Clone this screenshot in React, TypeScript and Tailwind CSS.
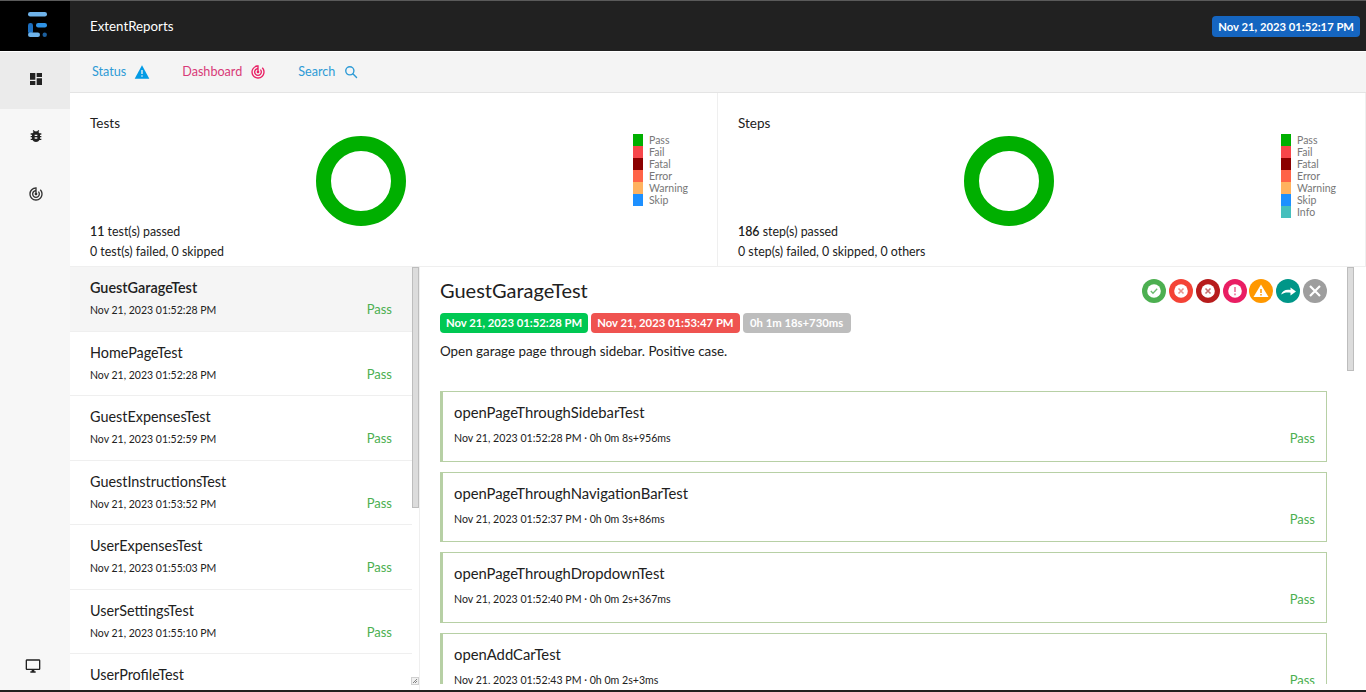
const tests = [
  ['GuestGarageTest', 'Nov 21, 2023 01:52:28 PM'],
  ['HomePageTest', 'Nov 21, 2023 01:52:28 PM'],
  ['GuestExpensesTest', 'Nov 21, 2023 01:52:59 PM'],
  ['GuestInstructionsTest', 'Nov 21, 2023 01:53:52 PM'],
  ['UserExpensesTest', 'Nov 21, 2023 01:55:03 PM'],
  ['UserSettingsTest', 'Nov 21, 2023 01:55:10 PM'],
];

const nodes = [
  ['openPageThroughSidebarTest', 'Nov 21, 2023 01:52:28 PM', '0h 0m 8s+956ms'],
  ['openPageThroughNavigationBarTest', 'Nov 21, 2023 01:52:37 PM', '0h 0m 3s+86ms'],
  ['openPageThroughDropdownTest', 'Nov 21, 2023 01:52:40 PM', '0h 0m 2s+367ms'],
  ['openAddCarTest', 'Nov 21, 2023 01:52:43 PM', '0h 0m 2s+3ms'],
];

const legend = [
  ['Pass', 'bg-[#00af00]'],
  ['Fail', 'bg-[#f7464a]'],
  ['Fatal', 'bg-[#8b0000]'],
  ['Error', 'bg-[#ff6347]'],
  ['Warning', 'bg-[#ffb25f]'],
  ['Skip', 'bg-[#1e90ff]'],
  ['Info', 'bg-[#46bfbd]'],
];

const radarPath =
  'M19.07 4.93l-1.41 1.41C19.1 7.79 20 9.79 20 12c0 4.42-3.58 8-8 8s-8-3.58-8-8c0-4.08 3.05-7.44 7-7.93v2.02C8.16 6.57 6 9.03 6 12c0 3.31 2.69 6 6 6s6-2.69 6-6c0-1.66-.67-3.16-1.76-4.24l-1.41 1.41C15.55 9.9 16 10.9 16 12c0 2.21-1.79 4-4 4s-4-1.79-4-4c0-1.86 1.28-3.41 3-3.86v2.14c-.6.35-1 .98-1 1.72 0 1.1.9 2 2 2s2-.9 2-2c0-.74-.4-1.38-1-1.72V2h-1C6.48 2 2 6.48 2 12s4.48 10 10 10 10-4.48 10-10c0-2.76-1.12-5.26-2.93-7.07z';

function Icon({ d, className }: { d: string; className: string }) {
  return (
    <svg viewBox="0 0 24 24" className={className} fill="currentColor">
      <path d={d} />
    </svg>
  );
}

function Logo() {
  return (
    <svg width="19" height="25" viewBox="0 0 19 25">
      <rect x="0" y="0" width="19" height="4.5" rx="2.2" fill="#6fb3ea" />
      <rect x="0" y="11" width="5" height="11" rx="2.4" fill="#1c6fc0" />
      <rect x="8" y="11" width="11" height="4.5" rx="2.2" fill="#2f93e6" />
      <rect x="0" y="20.5" width="12" height="4.5" rx="2.2" fill="#6fb3ea" />
      <circle cx="16.7" cy="22.7" r="2.2" fill="#1c5f9e" />
    </svg>
  );
}

function Panel({ title, total, noun, extra, items }: { title: string; total: string; noun: string; extra: string; items: string[][] }) {
  return (
    <div className="relative flex-1 min-w-0 bg-white border-r border-[#efefef] pl-5 pt-5">
      <div className="text-[13.5px] leading-5 text-[#212121]">{title}</div>
      <div className="flex">
        <div className="flex-1 flex justify-center pr-[2px]">
          <div className="w-[90px] h-[90px] mt-[3px] rounded-full border-[15px] border-[#00af00]" />
        </div>
        <div className="w-[84px] shrink-0 mt-px text-[10.5px] leading-3 text-[#777]">
          {items.map(([name, color]) => (
            <div key={name} className="flex items-center gap-[6px] h-3">
              <span className={`w-[10px] h-3 ${color}`} />
              <span>{name}</span>
            </div>
          ))}
        </div>
      </div>
      <div className="absolute left-5 top-[129px] text-[12.4px] leading-5 text-[#212121]">
        <div><b className="font-semibold">{total}</b> {noun}(s) passed</div>
        <div>0 {noun}(s) failed, 0 skipped{extra}</div>
      </div>
    </div>
  );
}

function Dot({ color, children }: { color: string; children: React.ReactNode }) {
  return (
    <span className={`w-6 h-6 rounded-full ${color}`}>
      <svg viewBox="0 0 24 24" className="w-6 h-6">{children}</svg>
    </span>
  );
}

export default function App() {
  return (
    <div className="h-[692px] overflow-hidden flex flex-col font-['Lato','Noto_Sans',sans-serif] text-[#212121] bg-white">
      <div className="h-[1px] bg-[#5a5a5a] shrink-0" />
      <header className="h-[51px] shrink-0 bg-[#212121] flex items-center border-b border-white">
        <div className="w-[70px] h-full bg-black flex justify-start pl-[28px] pt-[11px]"><Logo /></div>
        <div className="pl-5 pt-[2px] text-[13.3px] text-white">ExtentReports</div>
        <div className="ml-auto mr-[6px] mt-px bg-[#1565c0] text-white text-[11.25px] font-bold leading-[21px] px-[6px] rounded-[4px]">Nov 21, 2023 01:52:17 PM</div>
      </header>
      <div className="flex flex-1 min-h-0">
        <aside className="w-[70px] shrink-0 bg-[#f7f7f7] flex flex-col items-center">
          <div className="w-full h-[57px] shrink-0 bg-[#ebebeb] flex items-center justify-center pb-1 pl-[2px]">
            <Icon className="w-4 h-4" d="M3 13h8V3H3v10zm0 8h8v-6H3v6zm10 0h8V11h-8v10zm0-18v6h8V3h-8z" />
          </div>
          <div className="w-full h-[58px] shrink-0 flex items-center justify-center pb-1 pl-[2px]">
            <Icon className="w-4 h-4" d="M20 8h-2.81c-.45-.78-1.07-1.45-1.82-1.96L17 4.41 15.59 3l-2.17 2.17C12.96 5.06 12.49 5 12 5c-.49 0-.96.06-1.41.17L8.41 3 7 4.41l1.62 1.63C7.88 6.55 7.26 7.22 6.81 8H4v2h2.09c-.05.33-.09.66-.09 1v1H4v2h2v1c0 .34.04.67.09 1H4v2h2.81c1.04 1.79 2.97 3 5.19 3s4.15-1.21 5.19-3H20v-2h-2.09c.05-.33.09-.66.09-1v-1h2v-2h-2v-1c0-.34-.04-.67-.09-1H20V8zm-6 8h-4v-2h4v2zm0-4h-4v-2h4v2z" />
          </div>
          <div className="w-full h-[58px] shrink-0 flex items-center justify-center pb-1 pl-[2px]">
            <Icon className="w-4 h-4 text-[#333]" d={radarPath} />
          </div>
          <div className="mt-auto mb-[16px] pr-1">
            <Icon className="w-4 h-4" d="M21 2H3c-1.1 0-2 .9-2 2v12c0 1.1.9 2 2 2h7v2H8v2h8v-2h-2v-2h7c1.1 0 2-.9 2-2V4c0-1.1-.9-2-2-2zm0 14H3V4h18v12z" />
          </div>
        </aside>
        <div className="flex-1 min-w-0 flex flex-col">
          <nav className="h-[41px] shrink-0 bg-[#f4f4f4] border-b border-[#e4e4e4] flex items-center text-[12.6px] pl-[22px]">
            <span className="text-[#2e9bd6]">Status</span>
            <svg viewBox="0 0 24 24" className="w-[16px] h-[16px] ml-2" fill="#039be5"><path d="M1 22 12 2l11 20Z" /><rect x="11" y="9" width="2" height="6" fill="#f4f4f4" /><rect x="11" y="17" width="2" height="2" fill="#f4f4f4" /></svg>
            <span className="text-[#d83a78] ml-[32px]">Dashboard</span>
            <Icon className="w-[16px] h-[16px] ml-2 text-[#e91e63]" d={radarPath} />
            <span className="text-[#2e9bd6] ml-[32px]">Search</span>
            <svg viewBox="0 0 24 24" className="w-[14px] h-[14px] ml-[9px] text-[#2e9bd6]" fill="none" stroke="currentColor" strokeWidth="2.4" strokeLinecap="round"><circle cx="10" cy="10" r="7" /><path d="m15.5 15.5 6 6" /></svg>
          </nav>
          <div className="h-[174px] shrink-0 flex border-b border-[#efefef]">
            <Panel title="Tests" total="11" noun="test" extra="" items={legend.slice(0, 6)} />
            <Panel title="Steps" total="186" noun="step" extra=", 0 others" items={legend} />
          </div>
          <div className="flex flex-1 min-h-0 overflow-hidden">
            <div className="w-[350px] shrink-0 flex border-r border-[#efefef] relative">
              <div className="w-[342px] shrink-0">
                {tests.map(([name, time], i) => (
                  <div key={name} className={`h-[64.5px] pl-5 pr-5 pt-[11px] border-b border-[#efefef] ${i === 0 ? 'bg-[#f5f5f5]' : ''}`}>
                    <div className={`text-[14.4px] leading-5 ${i === 0 ? 'font-semibold' : ''}`}>{name}</div>
                    <div className="flex justify-between items-center mt-[2px] text-[10.5px] leading-5">
                      <span>{time}</span>
                      <span className="text-[13px] text-[#4caf50] -mt-[2px]">Pass</span>
                    </div>
                  </div>
                ))}
                <div className="pl-5 pt-[11px] text-[14.4px] leading-5">UserProfileTest</div>
              </div>
              <div className="w-[7px] h-[241px] bg-[#dcdcdc] border border-[#bdbdbd]" />
              <div className="absolute right-0 bottom-[5px] w-[8px] h-[8px] bg-[#f0f0f0] border border-[#d0d0d0]">
                <svg viewBox="0 0 6 6" className="w-full h-full" stroke="#666" strokeWidth="0.8"><path d="M1 5 5 1M3 5l2-2" /></svg>
              </div>
            </div>
            <div className="flex-1 min-w-0 flex">
              <div className="w-[927px] shrink-0 h-[417px] overflow-hidden pl-5 pr-5">
                <div className="flex items-start justify-between pt-[11px]">
                  <div className="text-[20px] leading-6 text-[#212121]">GuestGarageTest</div>
                  <div className="flex gap-[2.84px] mt-px">
                    <Dot color="bg-[#4caf50]">
                      <circle cx="12" cy="12" r="6.8" fill="#fff" />
                      <path d="m8.8 12 2.2 2.2 4.2-4.4" fill="none" stroke="#6dbb70" strokeWidth="1.3" />
                    </Dot>
                    <Dot color="bg-[#f44336]">
                      <circle cx="12" cy="12" r="6.8" fill="#fff" />
                      <path d="m9.5 9.5 5 5m0-5-5 5" stroke="#e8928c" strokeWidth="1.6" />
                    </Dot>
                    <Dot color="bg-[#b71c1c]">
                      <circle cx="12" cy="12" r="6.8" fill="#fff" />
                      <path d="m9.5 9.5 5 5m0-5-5 5" stroke="#c56f6f" strokeWidth="1.6" />
                    </Dot>
                    <Dot color="bg-[#e91e63]">
                      <circle cx="12" cy="12" r="6.8" fill="#fff" />
                      <path d="M12 8v5M12 14.6v1.6" stroke="#ee7fa3" strokeWidth="1.8" />
                    </Dot>
                    <Dot color="bg-[#ff9800]">
                      <path d="M4.5 18 12 5.5 19.5 18Z" fill="#fff" />
                      <path d="M12 10v4M12 15v1.6" stroke="#ff9800" strokeWidth="1.5" />
                    </Dot>
                    <Dot color="bg-[#009688]">
                      <path d="M5 15.5c1.5-4 5-5.5 9.5-4.5V8.5L20 12.5l-5.5 4v-2.8c-3.5-.6-6.5-.2-9.5 1.8Z" fill="#fff" />
                    </Dot>
                    <Dot color="bg-[#9e9e9e]">
                      <path d="m7 7 10 10M17 7 7 17" stroke="#fff" strokeWidth="2.2" />
                    </Dot>
                  </div>
                </div>
                <div className="flex gap-[3px] mt-[10px] text-[11.3px] font-bold text-white leading-[20px]">
                  <span className="bg-[#00c853] px-[6px] rounded-[4px]">Nov 21, 2023 01:52:28 PM</span>
                  <span className="bg-[#ef5350] px-[6px] rounded-[4px]">Nov 21, 2023 01:53:47 PM</span>
                  <span className="bg-[#bdbdbd] px-[7.5px] rounded-[4px]">0h 1m 18s+730ms</span>
                </div>
                <div className="text-[13.4px] leading-5 mt-[8px]">Open garage page through sidebar. Positive case.</div>
                <div className="mt-[30px] flex flex-col gap-[10px]">
                  {nodes.map(([name, time, dur]) => (
                    <div key={name} className="h-[70.5px] shrink-0 border border-[#b7d0a5] border-l-[3px] pl-[11px] pr-[11px] pt-[10px]">
                      <div className="text-[14.8px] leading-5">{name}</div>
                      <div className="flex justify-between items-center mt-[6px] text-[10.6px] leading-5">
                        <span>{time} · {dur}</span>
                        <span className="text-[13px] text-[#4caf50]">Pass</span>
                      </div>
                    </div>
                  ))}
                </div>
              </div>
              <div className="w-[7px] h-[104px] bg-[#dcdcdc] border border-[#bdbdbd]" />
            </div>
          </div>
        </div>
      </div>
      <div className="h-[2px] shrink-0 bg-[#212121]" />
    </div>
  );
}
